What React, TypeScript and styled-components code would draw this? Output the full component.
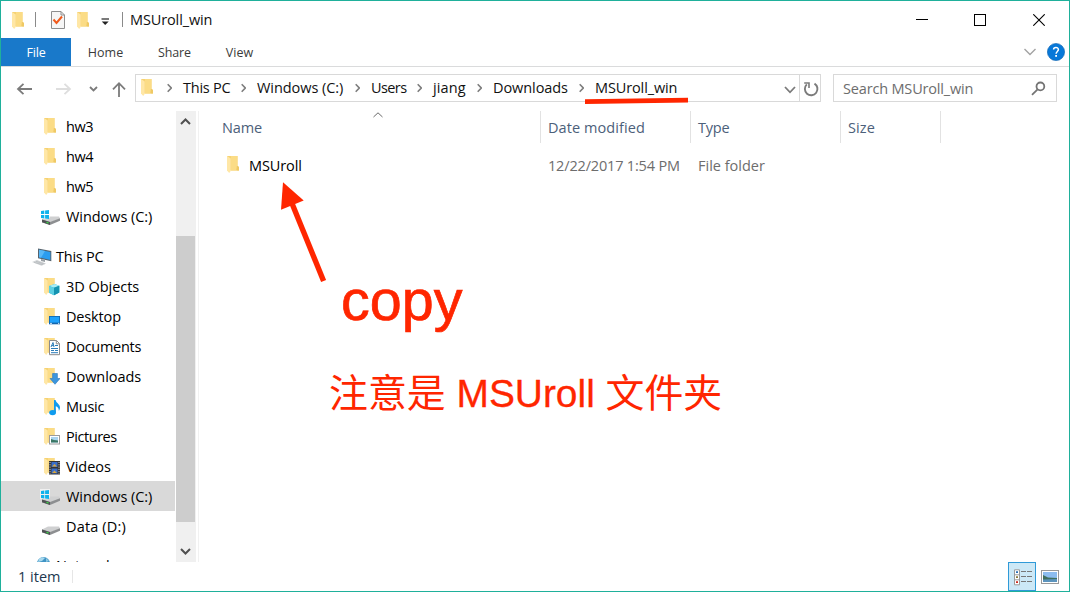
import React from "react";
import styled, { createGlobalStyle } from "styled-components";

const Global = createGlobalStyle`
  * { box-sizing: border-box; }
  body { margin: 0; background: #fff; }
  svg { display: block; flex: none; }
`;

const Win = styled.div`
  width: 1070px;
  height: 592px;
  display: flex;
  flex-direction: column;
  position: relative;
  overflow: hidden;
  border: 1px solid #1fb09b;
  background: #fff;
  color: #111;
  font: 14.5px/20px "Open Sans", "Noto Sans", sans-serif;
`;

const Txt = styled.span<{ $t?: number; $low?: boolean }>`
  white-space: pre;
  letter-spacing: ${(p) => p.$t ?? 0}px;
  padding-top: ${(p) => (p.$low ? 2 : 0)}px;
`;

const TitleBar = styled.header`
  height: 37px;
  flex: none;
  display: flex;
  align-items: center;
  padding-left: 7px;
`;
const TitleRule = styled.i<{ $ml: number; $mr: number }>`
  width: 1px;
  height: 15px;
  margin: 0 ${(p) => p.$mr}px 0 ${(p) => p.$ml}px;
  background: #8a8a8a;
`;
const Captions = styled.div`
  display: flex;
  margin-left: auto;
  padding-right: 1px;
`;
const Caption = styled.button`
  width: 58.5px;
  height: 36px;
  display: flex;
  align-items: center;
  justify-content: center;
  padding: 0;
  border: 0;
  background: none;
`;

const Ribbon = styled.nav`
  height: 29px;
  flex: none;
  display: flex;
  align-items: stretch;
  border-bottom: 1px solid #dadbdc;
  font-size: 12.5px;
  color: #3b3b3b;
`;
const Tab = styled.div<{ $w: number; $file?: boolean }>`
  width: ${(p) => p.$w}px;
  display: flex;
  align-items: center;
  justify-content: center;
  background: ${(p) => (p.$file ? "#1979ca" : "none")};
  color: ${(p) => (p.$file ? "#fff" : "inherit")};
`;
const RibbonEnd = styled.div`
  display: flex;
  align-items: center;
  gap: 11px;
  margin-left: auto;
  padding-right: 4px;
`;

const AddressRow = styled.div`
  height: 44px;
  flex: none;
  display: flex;
  align-items: flex-start;
  padding-top: 7px;
`;
const NavButtons = styled.div`
  width: 134px;
  height: 28px;
`;
const AddressBox = styled.div`
  width: 686px;
  height: 28px;
  display: flex;
  align-items: center;
  border: 1px solid #d9d9d9;
  padding-left: 2px;
`;
const Crumb = styled.div<{ $w: number }>`
  width: ${(p) => p.$w}px;
  height: 26px;
  display: flex;
  align-items: center;
  gap: 11px;
  padding-bottom: 1px;
`;
const DropArrow = styled.div`
  margin-left: auto;
  padding: 3px 3px 0 0;
`;
const Refresh = styled.div`
  width: 21px;
  height: 26px;
  display: flex;
  align-items: center;
  justify-content: center;
  padding: 1px 0 0 1px;
  border-left: 1px solid #d9d9d9;
`;
const SearchBox = styled.div`
  width: 224px;
  height: 28px;
  display: flex;
  align-items: center;
  justify-content: space-between;
  margin-left: 12px;
  padding: 0 10px 0 9px;
  border: 1px solid #d9d9d9;
  color: #6d6d6d;
`;

const Body = styled.div`
  height: 451px;
  flex: none;
  display: flex;
  overflow: hidden;
`;
const Tree = styled.div`
  width: 174px;
  height: 451px;
  overflow: hidden;
  color: #000;
`;
const TreeRow = styled.div<{ $root?: boolean; $on?: boolean }>`
  height: 30px;
  display: flex;
  align-items: center;
  gap: ${(p) => (p.$root ? 4 : 6)}px;
  margin-top: ${(p) => (p.$root ? 10 : 0)}px;
  padding-left: ${(p) => (p.$root ? 31 : 39)}px;
  background: ${(p) => (p.$on ? "#d9d9d9" : "none")};
`;
const ScrollBar = styled.div`
  width: 20px;
  margin-left: 1px;
  display: flex;
  flex-direction: column;
  background: #f0f0f0;
`;
const ScrollEnd = styled.div<{ $h: number; $pt: number }>`
  height: ${(p) => p.$h}px;
  padding: ${(p) => p.$pt}px 0 0 4px;
`;
const Thumb = styled.div`
  width: 19px;
  height: 286px;
  background: #cdcdcd;
`;
const Listing = styled.main`
  flex: 1;
  margin-left: 2px;
  border-left: 1px solid #f1f1f1;
`;
const Columns = styled.div`
  height: 33px;
  display: flex;
  color: #4c607a;
  padding-left: 16px;
`;
const Column = styled.div<{ $w: number }>`
  width: ${(p) => p.$w}px;
  height: 32px;
  display: flex;
  align-items: center;
  padding: 2px 0 0 7px;
  border-right: 1px solid #e2e2e2;
`;
const SortMark = styled.span`
  align-self: flex-start;
  margin: -1px 0 0 110.5px;
`;
const FileRow = styled.div`
  height: 30px;
  display: flex;
  align-items: center;
  margin-top: 6px;
  padding-left: 24px;
  color: #6d6d6d;
`;
const FileCell = styled.div<{ $w: number; $name?: boolean }>`
  width: ${(p) => p.$w}px;
  display: flex;
  align-items: center;
  gap: 6px;
  color: ${(p) => (p.$name ? "#000" : "inherit")};

  svg {
    margin-bottom: 2px;
  }
`;

const StatusBar = styled.footer`
  height: 29px;
  display: flex;
  align-items: center;
  padding-left: 17px;
  color: #22384e;
`;
const StatusRule = styled.i`
  width: 1px;
  height: 13px;
  margin-left: 12px;
  background: #e6e6e6;
`;
const ViewButtons = styled.div`
  display: flex;
  align-items: center;
  gap: 5px;
  margin-left: auto;
  padding-right: 10px;
`;
const DetailsButton = styled.div`
  width: 28px;
  height: 29px;
  display: flex;
  align-items: center;
  justify-content: center;
  padding: 1px 0 0 1px;
  border: 1px solid #2f9ad8;
  background: #cce8f6;
`;

const Marks = styled.svg`
  position: absolute;
  left: -1px;
  top: -1px;
`;
const Note = styled.div<{ $x: number; $y: number; $s: number }>`
  position: absolute;
  left: ${(p) => p.$x}px;
  top: ${(p) => p.$y}px;
  color: #ff2600;
  white-space: pre;
  font: ${(p) => p.$s}px/60px "Liberation Sans", "Noto Sans CJK SC", sans-serif;
`;
const Latin = styled.span<{ $b: number }>`
  -webkit-text-stroke: ${(p) => p.$b}px #ff2600;
`;

const FolderBase = () => (
  <>
    <path d="M4 2H14.5V12L16 13V16.5H6Z" fill="#f6d273" />
    <path d="M8 2H14.5V12L13 16.5H8Z" fill="#fbdc86" />
    <path d="M13.8 12H14.6L16 13V16.5H13.5Z" fill="#efc965" />
    <path d="M4 2L7.7 4.6V17L6.2 19L4 16.5Z" fill="#ffe7a6" />
  </>
);
const DriveBase = () => (
  <>
    <path d="M2 13.5L8 10.5H19L20 12.5L10 16.5Z" fill="#cfd0d1" />
    <path d="M2 13.5L10 16L20 12.2V14.8L10 19L2 16.2Z" fill="#8d8f91" />
    <path d="M2 13.5L10 16V19L2 16.2Z" fill="#4f5254" />
    <path d="M6.5 16.3L8.6 17" stroke="#3ddc4a" strokeWidth="1.3" />
  </>
);

const overlays: Record<string, React.ReactNode> = {
  folder: null,
  objects: (
    <>
      <path d="M9 10L14.5 8L19.3 9.8V16.5L14 19.3L9 16.8Z" fill="#27b4cf" />
      <path d="M9 10L14.5 8L19.3 9.8L14 11.8Z" fill="#a9ecf4" />
      <path d="M9 10L14 11.8V19.3L9 16.8Z" fill="#5ccfe2" />
      <path d="M14 11.8L19.3 9.8V16.5L14 19.3Z" fill="#1593b1" />
    </>
  ),
  desktop: (
    <>
      <rect x="9" y="10" width="11" height="8.3" fill="#1265ad" />
      <rect x="9.8" y="10.8" width="9.4" height="5.8" fill="#1fa2fb" />
      <path d="M10 17.4H12M18 17.4H19.3" stroke="#fff" strokeWidth=".8" />
    </>
  ),
  documents: (
    <>
      <path d="M9.5 4.5H16.5L19.5 7.5V18.7H9.5Z" fill="#fff" stroke="#8b8b8b" />
      <path d="M16.3 4.5V7.8H19.5" fill="none" stroke="#8b8b8b" />
      <path d="M11 11L13 6.5L14 11M11.7 9.6H13.8M15 9.5H18M11 12.5H18M11 14.5H14M15 14.5H18M11 16.7H18" fill="none" stroke="#2b7cb8" strokeWidth="1" />
    </>
  ),
  downloads: <path d="M12.6 7.5H17.4V12.5H20L15 18.3L10 12.5H12.6Z" fill="#3d96dd" stroke="#2576bd" strokeWidth=".6" />,
  music: (
    <>
      <path d="M14 4H15.6C16 7 20 8 20 11.5C20 13 19.4 14 18.8 14.8C19 12 17.5 10.8 15.8 10.3V16H14Z" fill="#0e9bef" />
      <ellipse cx="12.6" cy="16.6" rx="3.4" ry="2.7" fill="#0e9bef" />
    </>
  ),
  pictures: (
    <>
      <rect x="9.5" y="9.5" width="10" height="8.5" fill="#fff" stroke="#9b9b9b" />
      <rect x="11" y="11" width="7" height="5.5" fill="#a9d4ef" />
      <path d="M11 13L14 14L18 14.5V16.5H11Z" fill="#3b7765" />
    </>
  ),
  videos: (
    <>
      <rect x="9" y="5" width="11" height="13.5" fill="#353535" />
      <path d="M10 6V18M19 6V18" stroke="#ddd" strokeWidth="1" strokeDasharray="1 1.3" />
      <rect x="11.5" y="6" width="6" height="5" fill="#3b6fca" />
      <rect x="11.5" y="12.5" width="6" height="5" fill="#3b6fca" />
      <path d="M12 10.5L14.5 8L17 10.5ZM12 17L14.5 14.5L17 17Z" fill="#d9a53d" />
    </>
  ),
};

const Icon = ({ kind }: { kind: string }) => (
  <svg width="20" height="20" viewBox="0 0 20 20">
    {kind === "pc" ? (
      <>
        <path d="M6 2.5L19.3 5V15.3L6 12.3Z" fill="#56636d" />
        <path d="M7 3.8L18.4 6V14L7 11.3Z" fill="#2b9df0" />
        <path d="M7 3.8L13 5L9 11.8L7 11.3Z" fill="#58b8f8" />
        <path d="M9 13L13 13.8V16L9 15Z" fill="#9aa0a5" />
        <path d="M0 16L5 14L14 17.4L9.5 19.8Z" fill="#cfd2d4" />
        <path d="M2 16.4L11 18.8M4 15.3L12.5 18" stroke="#a9adb0" strokeWidth=".5" />
      </>
    ) : kind === "network" ? (
      <>
        <circle cx="11.5" cy="7.5" r="6.5" fill="#3f93c4" />
        <path d="M7 3Q10 0 13 2L10 5L6 6Z" fill="#a8d9ee" />
        <path d="M14 2L17 5L14 6Z" fill="#8cc7e2" />
      </>
    ) : kind === "windows" || kind === "drive" ? (
      <>
        <DriveBase />
        {kind === "windows" && (
          <>
            <path d="M0 3H10V11.5L8 13.3H0Z" fill="#fff" fillOpacity=".6" />
            <path d="M1 5L4.3 4.5V8H1ZM5.1 4.4L9 4V8H5.1ZM1 8.9H4.3V12.4L1 12ZM5.1 8.9H9V13L5.1 12.5Z" fill="#0fb2ec" />
          </>
        )}
      </>
    ) : (
      <>
        <FolderBase />
        {overlays[kind]}
      </>
    )}
  </svg>
);

const Chevron = () => (
  <svg width="5" height="10" viewBox="0 0 5 10">
    <path d="M.7 1.2L4.3 5L.7 8.8" fill="none" stroke="#7d7d7d" strokeWidth="1.6" />
  </svg>
);

const tree: { k: string; t: string; s?: number; root?: boolean; on?: boolean }[] = [
  { k: "folder", t: "hw3", s: -0.4 },
  { k: "folder", t: "hw4", s: -0.4 },
  { k: "folder", t: "hw5", s: -0.4 },
  { k: "windows", t: "Windows (C:)", s: -0.05 },
  { k: "pc", t: "This PC", root: true, s: -0.25 },
  { k: "objects", t: "3D Objects", s: -0.03 },
  { k: "desktop", t: "Desktop", s: -0.15 },
  { k: "documents", t: "Documents", s: -0.28 },
  { k: "downloads", t: "Downloads", s: -0.05 },
  { k: "music", t: "Music", s: -0.25 },
  { k: "pictures", t: "Pictures", s: -0.45 },
  { k: "videos", t: "Videos" },
  { k: "windows", t: "Windows (C:)", on: true, s: -0.05 },
  { k: "drive", t: "Data (D:)", s: 0.15 },
  { k: "network", t: "Network", root: true },
];

const crumbs: { t: string; w: number; s?: number }[] = [
  { t: "This PC", w: 74, s: -0.25 },
  { t: "Windows (C:)", w: 114, s: -0.05 },
  { t: "Users", w: 62, s: -0.6 },
  { t: "jiang", w: 60, s: 0.1 },
  { t: "Downloads", w: 102, s: -0.08 },
  { t: "MSUroll_win", w: 110, s: -0.12 },
];

export default function App() {
  return (
    <>
      <Global />
      <Win>
        <TitleBar>
          <Icon kind="folder" />
          <TitleRule $ml={7} $mr={14} />
          <svg width="16" height="20" viewBox="0 0 16 20">
            <path d="M1.5 1.5H11L14.5 5V18.5H1.5Z" fill="#f6f6f6" stroke="#8e8e8e" />
            <path d="M11 1.5V5H14.5" fill="none" stroke="#8e8e8e" />
            <path d="M3.5 9.5L6.5 13L12 6.5" fill="none" stroke="#f05a1c" strokeWidth="2" />
          </svg>
          <svg width="25" height="20" viewBox="-7 0 25 20"><FolderBase /></svg>
          <svg width="22" height="20" viewBox="-1 0 22 20">
            <path d="M9.5 9H17" stroke="#222" strokeWidth="1.2" />
            <path d="M9.8 11.5H16.7L13.2 15Z" fill="#222" />
          </svg>
          <TitleRule $ml={9} $mr={7} />
          <Txt $t={-0.12}>MSUroll_win</Txt>
          <Captions>
            <Caption><svg width="12" height="12"><path d="M0 5.5H12" stroke="#000" /></svg></Caption>
            <Caption><svg width="12" height="12"><rect x=".5" y=".5" width="11" height="11" fill="none" stroke="#000" /></svg></Caption>
            <Caption><svg width="12" height="12"><path d="M.3 .3L11.7 11.7M11.7 .3L.3 11.7" stroke="#000" strokeWidth="1.1" /></svg></Caption>
          </Captions>
        </TitleBar>
        <Ribbon>
          <Tab $w={70} $file><Txt $low $t={-0.2}>File</Txt></Tab>
          <Tab $w={69}><Txt $low>Home</Txt></Tab>
          <Tab $w={69}><Txt $low $t={-0.1}>Share</Txt></Tab>
          <Tab $w={61}><Txt $low>View</Txt></Tab>
          <RibbonEnd>
            <svg width="12" height="8"><path d="M.5 1L6 6.5L11.5 1" fill="none" stroke="#a3a3a3" strokeWidth="1.4" /></svg>
            <svg width="18" height="18" viewBox="0 0 18 18">
              <circle cx="9" cy="9" r="8.6" fill="#0878d8" stroke="#0a62b0" strokeWidth=".6" />
              <path d="M6.6 6.6C6.6 3.8 11.4 3.8 11.4 6.6C11.4 8.5 9.1 8.5 9.1 10.8" fill="none" stroke="#fff" strokeWidth="1.5" />
              <rect x="8.2" y="12" width="1.8" height="1.8" fill="#fff" />
            </svg>
          </RibbonEnd>
        </Ribbon>
        <AddressRow>
          <NavButtons>
            <svg width="134" height="28" viewBox="1 74 134 28" fill="none">
              <path d="M32 89H18M23.5 83.8L18 89L23.5 94.2" stroke="#7b7b7b" strokeWidth="1.8" />
              <path d="M56 89H70M64.5 83.8L70 89L64.5 94.2" stroke="#dedede" strokeWidth="1.8" />
              <path d="M90 87L93.5 90.5L97 87" stroke="#7b7b7b" strokeWidth="1.8" />
              <path d="M119 97V83.5M113 89.3L119 83.2L125 89.3" stroke="#7b7b7b" strokeWidth="1.8" />
            </svg>
          </NavButtons>
          <AddressBox>
            <svg width="29" height="20" viewBox="1 1 29 20"><FolderBase /></svg>
            {crumbs.map((c) => (
              <Crumb key={c.t} $w={c.w}>
                <Chevron />
                <Txt $t={c.s}>{c.t}</Txt>
              </Crumb>
            ))}
            <DropArrow><svg width="12" height="8"><path d="M1 1L6 6.3L11 1" fill="none" stroke="#7b7b7b" strokeWidth="1.8" /></svg></DropArrow>
            <Refresh>
              <svg width="16" height="16" viewBox="0 0 16 16" fill="none" stroke="#7b7b7b" strokeWidth="1.9">
                <path d="M11.5 2.6A6.3 6.3 0 1 1 3.8 3.4" />
                <path d="M1.2 2H6V7" strokeWidth="1.6" />
              </svg>
            </Refresh>
          </AddressBox>
          <SearchBox>
            <Txt $low $t={-0.17}>Search MSUroll_win</Txt>
            <svg width="15" height="15" viewBox="0 0 15 15" fill="none" stroke="#747474" strokeWidth="1.8">
              <circle cx="9.4" cy="5.4" r="3.9" />
              <path d="M6.6 8.3L1 13.8" />
            </svg>
          </SearchBox>
        </AddressRow>
        <Body>
          <Tree>
            {tree.map((r, i) => (
              <TreeRow key={i} $root={r.root} $on={r.on}>
                <Icon kind={r.k} />
                <Txt $low={r.k !== "network"} $t={r.s}>{r.t}</Txt>
              </TreeRow>
            ))}
          </Tree>
          <ScrollBar>
            <ScrollEnd $h={125} $pt={6}>
              <svg width="11" height="9"><path d="M1 7L5.5 2.5L10 7" fill="none" stroke="#505050" strokeWidth="2" /></svg>
            </ScrollEnd>
            <Thumb />
            <ScrollEnd $h={40} $pt={25}>
              <svg width="11" height="9"><path d="M1 2L5.5 6.5L10 2" fill="none" stroke="#505050" strokeWidth="2" /></svg>
            </ScrollEnd>
          </ScrollBar>
          <Listing>
            <Columns>
              <Column $w={326}>
                <Txt $t={-0.1}>Name</Txt>
                <SortMark><svg width="10" height="6"><path d="M.5 5L5 .8L9.5 5" fill="none" stroke="#6a6a6a" /></svg></SortMark>
              </Column>
              <Column $w={150}><Txt $t={0.08}>Date modified</Txt></Column>
              <Column $w={150}><Txt $t={-0.2}>Type</Txt></Column>
              <Column $w={100}><Txt $t={0.1}>Size</Txt></Column>
            </Columns>
            <FileRow>
              <FileCell $w={325} $name><Icon kind="folder" /><Txt $low $t={-0.1}>MSUroll</Txt></FileCell>
              <FileCell $w={150}><Txt $low $t={-0.17}>12/22/2017 1:54 PM</Txt></FileCell>
              <FileCell $w={150}><Txt $low>File folder</Txt></FileCell>
            </FileRow>
          </Listing>
        </Body>
        <StatusBar>
          <Txt>1 item</Txt>
          <StatusRule />
          <ViewButtons>
            <DetailsButton>
              <svg width="18" height="17" viewBox="0 0 18 17">
                <path d="M.5 .8H5.5V15.8H.5ZM.5 5.8H5.5M.5 10.8H5.5" fill="#fff" stroke="#9b9b9b" />
                <path d="M7 2.5H12M13 2.5H18M7 7.5H12M13 7.5H18M7 12.5H12M13 12.5H18" stroke="#777" />
                <path d="M2 3.2H4" stroke="#2a6fb5" strokeWidth="1.8" />
                <path d="M2 8.2H4" stroke="#8a7a3c" strokeWidth="1.8" />
                <path d="M2 13.2H4" stroke="#cc2a1e" strokeWidth="1.8" />
              </svg>
            </DetailsButton>
            <svg width="18" height="14" viewBox="0 0 18 14">
              <rect x=".5" y=".5" width="17" height="13" fill="#fff" stroke="#999" />
              <rect x="2" y="2" width="14" height="10" fill="#8dbdf0" />
              <path d="M2 5L7 7.5L16 8V10H2Z" fill="#41705e" />
              <path d="M2 9.5L16 9V12H2Z" fill="#5c94bd" />
            </svg>
          </ViewButtons>
        </StatusBar>
        <Marks width="1070" height="592" viewBox="0 0 1070 592">
          <path d="M585 99.3L688 97.8V102.6L585 104Z" fill="#ff2600" />
          <path d="M283 182.3L303.7 200.5L281 209.7Z" fill="#ff2600" />
          <path d="M291 201L323.6 281" stroke="#ff2600" strokeWidth="5.4" />
        </Marks>
        <Note $x={340} $y={269} $s={57.5}><Latin $b={0.7}>copy</Latin></Note>
        <Note $x={328} $y={363} $s={38.9}>注意是 <Latin $b={0.3}>MSUroll</Latin> 文件夹</Note>
      </Win>
    </>
  );
}
